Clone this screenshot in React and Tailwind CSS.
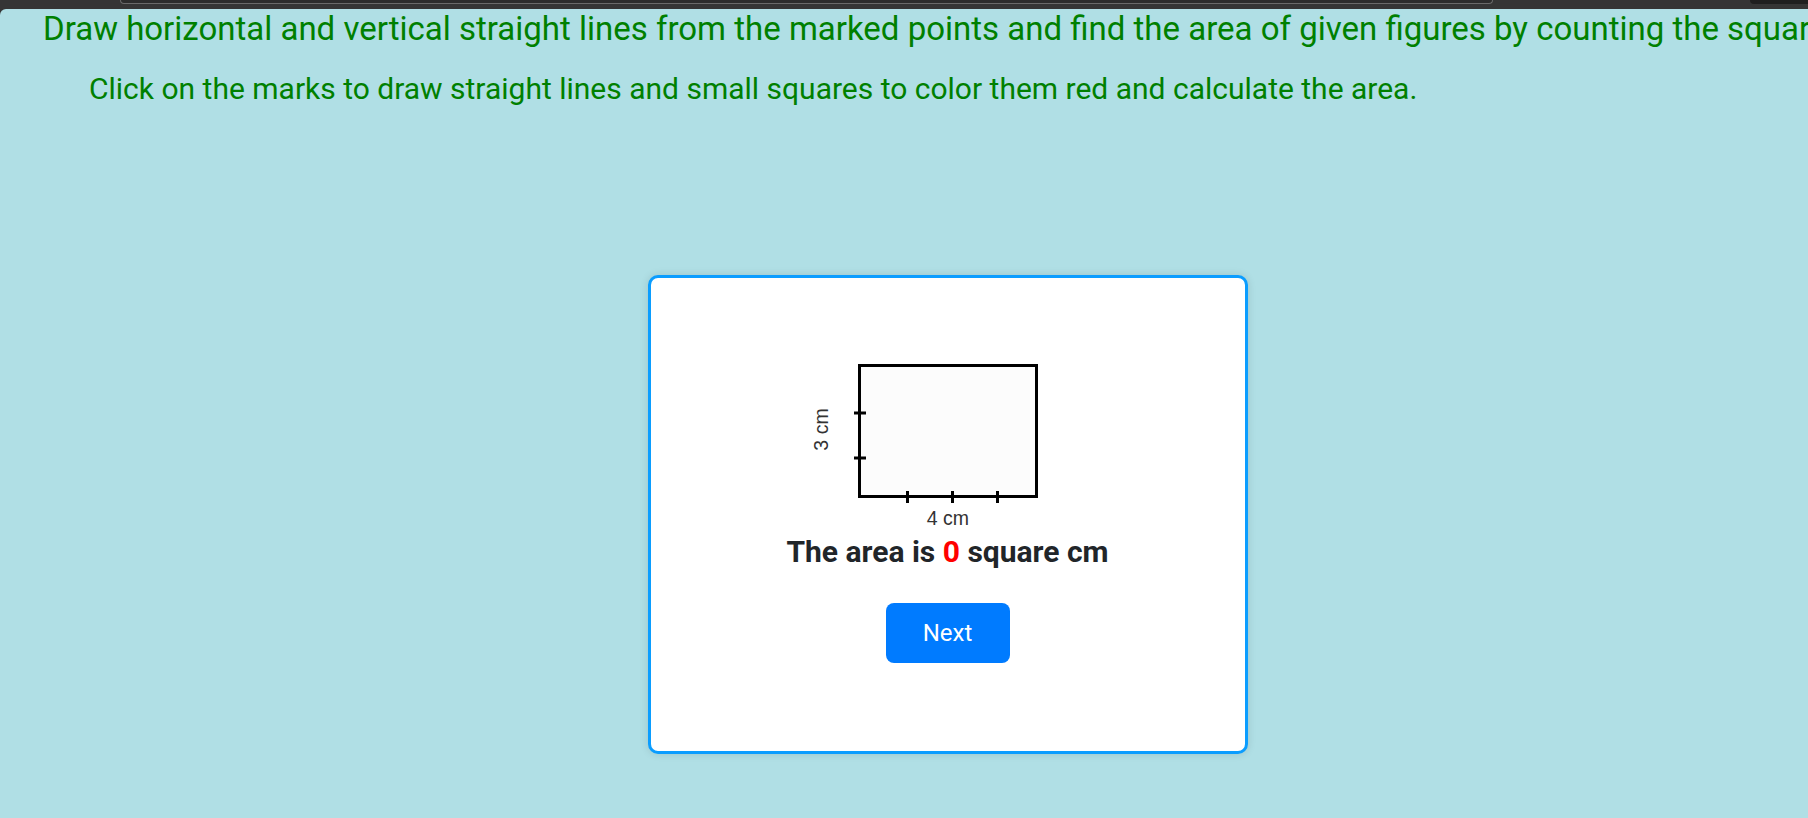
import React from "react";

const Figure = () => {
    // 45px per cm, box is 4 x 3
    return (
        <svg width="280" height="180" viewBox="0 0 280 180" className="block">
            <rect x="51.5" y="11.5" width="177" height="131" fill="#fcfcfc" stroke="#000" strokeWidth="3" />
            <line x1="46" y1="59" x2="58" y2="59" stroke="#000" strokeWidth="3" />
            <line x1="46" y1="104" x2="58" y2="104" stroke="#000" strokeWidth="3" />
            <line x1="99.5" y1="137" x2="99.5" y2="149" stroke="#000" strokeWidth="3" />
            <line x1="144.5" y1="137" x2="144.5" y2="149" stroke="#000" strokeWidth="3" />
            <line x1="189.5" y1="137" x2="189.5" y2="149" stroke="#000" strokeWidth="3" />
            <text x="140" y="170.5" textAnchor="middle" fontSize="19.5" fill="#333" fontFamily="'Liberation Sans', Arial, sans-serif">
                4 cm
            </text>
            <text
                transform="translate(20 75.5) rotate(-90)"
                textAnchor="middle"
                fontSize="19.5"
                fill="#333"
                fontFamily="'Liberation Sans', Arial, sans-serif"
            >
                3 cm
            </text>
        </svg>
    );
};

const App = () => {
    return (
        <div className="min-h-screen bg-[#353535] font-['Roboto',sans-serif] overflow-hidden">
            <div className="h-[9px] flex items-start">
                <div className="ml-[120px] w-[1373px] h-[4px] rounded-b-[6px] border border-t-0 border-[#6a6a6a] bg-[#2c2c2c]" />
                <div className="ml-auto w-[58px] h-[4px] rounded-bl-[6px] bg-[#1f1f1f]" />
            </div>
            <div className="min-h-[809px] bg-[#b0dfe5] rounded-tl-[6px]">
                <h2 className="pl-[43px] text-[33px] leading-[1.2] text-[#008000] whitespace-nowrap">
                    Draw horizontal and vertical straight lines from the marked points and find the area of given figures by counting the squares.
                </h2>
                <p className="pl-[89px] mt-[22px] text-[30px] leading-[1.2] text-[#008000] whitespace-nowrap">
                    Click on the marks to draw straight lines and small squares to color them red and calculate the area.
                </p>
                <div className="flex justify-center pl-[87px] mt-[168px]">
                    <div className="w-[600px] h-[479px] bg-white border-[3px] border-[#0a9dff] rounded-[10px] shadow-[0_0_8px_rgba(0,0,0,0.12)] flex flex-col items-center pt-[76px]">
                        <Figure />
                        <h3 className="text-[30px] leading-[1.2] font-bold text-[#212529] whitespace-nowrap">
                            The area is <span className="text-[#ff0000]">0</span> square cm
                        </h3>
                        <button className="mt-[33px] w-[124px] h-[60px] rounded-[8px] bg-[#007bff] text-white text-[24px] flex items-center justify-center">
                            Next
                        </button>
                    </div>
                </div>
            </div>
        </div>
    );
};

export default App;
